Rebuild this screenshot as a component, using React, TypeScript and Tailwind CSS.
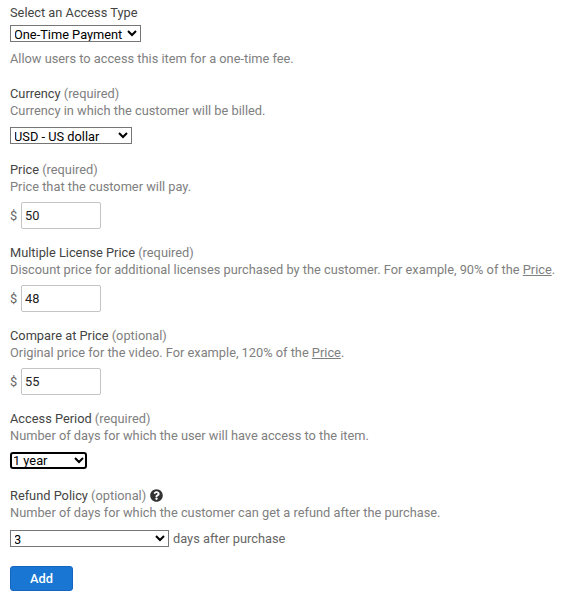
function Field({
    label,
    note,
    help,
    after = 'mt-[18px]',
    children,
}: {
    label: string;
    note?: string;
    help?: boolean;
    after?: string;
    children: React.ReactNode;
}) {
    return (
        <div className={after}>
            <div className="flex h-[17px] items-center leading-[17px]">
                <span>
                    {label} {note && <span className="text-[#808080]">({note})</span>}
                </span>
                {help && (
                    <svg viewBox="0 0 512 512" className="ml-[4px] size-[13px] fill-[#333]">
                        <path d="M504 256c0 137-111 248-248 248S8 393 8 256 119 8 256 8s248 111 248 248zM262.700 90c-54.500 0-89.300 23-116.500 63.800-3.500 5.300-2.400 12.400 2.700 16.300l34.700 26.300c5.200 3.900 12.600 3 16.700-2.100 17.900-22.700 30.100-35.800 57.300-35.800 20.400 0 45.700 13.100 45.700 32.900 0 15-12.400 22.700-32.500 34C247.100 238.500 216 254.900 216 296v4c0 6.600 5.400 12 12 12h56c6.600 0 12-5.400 12-12v-1.300c0-28.500 83.200-29.700 83.200-106.700 0-58-60.200-102-116.500-102zM256 338c-25.400 0-46 20.600-46 46 0 25.400 20.600 46 46 46s46-20.600 46-46c0-25.400-20.600-46-46-46z" />
                    </svg>
                )}
            </div>
            {children}
        </div>
    );
}

function Hint({ children }: { children: React.ReactNode }) {
    return <p className="h-[17px] leading-[17px] whitespace-nowrap text-[#808080]">{children}</p>;
}

function PriceInput({ value }: { value: string }) {
    return (
        <div className="mt-[7px] flex items-center">
            <span className="w-[11px] text-[#666]">$</span>
            <input
                readOnly
                value={value}
                className="h-[27px] w-[80px] rounded-[2px] border border-[#c4c4c4] bg-white px-[3px] text-[12.8px] text-[#222]"
            />
        </div>
    );
}

const PriceLink = () => <span className="underline">Price</span>;

export default function App() {
    return (
        <div className="h-[594px] overflow-hidden bg-white px-[10px] pt-[4px] font-['Roboto',sans-serif] text-[12.8px] text-[#444]">
            <div className="h-[17px] leading-[17px]">Select an Access Type</div>
            <select className="mt-[4px] block h-[17px] w-[131px] border border-[#767676] bg-white indent-[-1px] text-[12.8px] leading-[15px] text-black">
                <option>One-Time Payment</option>
            </select>
            <p className="mt-[8px] h-[17px] leading-[17px] text-[#808080]">
                Allow users to access this item for a one-time fee.
            </p>

            <Field label="Currency" note="required">
                <Hint>Currency in which the customer will be billed.</Hint>
                <select className="mt-[8px] block h-[17px] w-[122px] border border-[#767676] bg-white indent-[-1px] text-[12.8px] leading-[15px] text-black">
                    <option>USD - US dollar</option>
                </select>
            </Field>

            <Field label="Price" note="required" after="mt-[17px]">
                <Hint>Price that the customer will pay.</Hint>
                <PriceInput value="50" />
            </Field>

            <Field label="Multiple License Price" note="required" after="mt-[15px]">
                <Hint>
                    Discount price for additional licenses purchased by the customer. For example, 90% of the <PriceLink />.
                </Hint>
                <PriceInput value="48" />
            </Field>

            <Field label="Compare at Price" note="optional" after="mt-[15px]">
                <Hint>
                    Original price for the video. For example, 120% of the <PriceLink />.
                </Hint>
                <PriceInput value="55" />
            </Field>

            <Field label="Access Period" note="required" after="mt-[15px]">
                <Hint>Number of days for which the user will have access to the item.</Hint>
                <select className="mt-[8px] block h-[17px] w-[77px] rounded-[3px] bg-white indent-[-1px] text-[12.8px] leading-[15px] text-black outline-2 -outline-offset-2 outline-black">
                    <option>1 year</option>
                </select>
            </Field>

            <Field label="Refund Policy" note="optional" help>
                <Hint>Number of days for which the customer can get a refund after the purchase.</Hint>
                <div className="mt-[8px] flex items-center">
                    <select className="block h-[17px] w-[159px] border border-[#767676] bg-white indent-[-1px] text-[12.8px] leading-[15px] text-black">
                        <option>3</option>
                    </select>
                    <span className="ml-[4px] text-[#666]">days after purchase</span>
                </div>
            </Field>

            <button className="mt-[18px] block h-[25px] w-[63px] rounded-[3px] border border-[#1565c0] bg-[#1976d2] text-[12.8px] font-medium text-white">
                Add
            </button>
        </div>
    );
}
